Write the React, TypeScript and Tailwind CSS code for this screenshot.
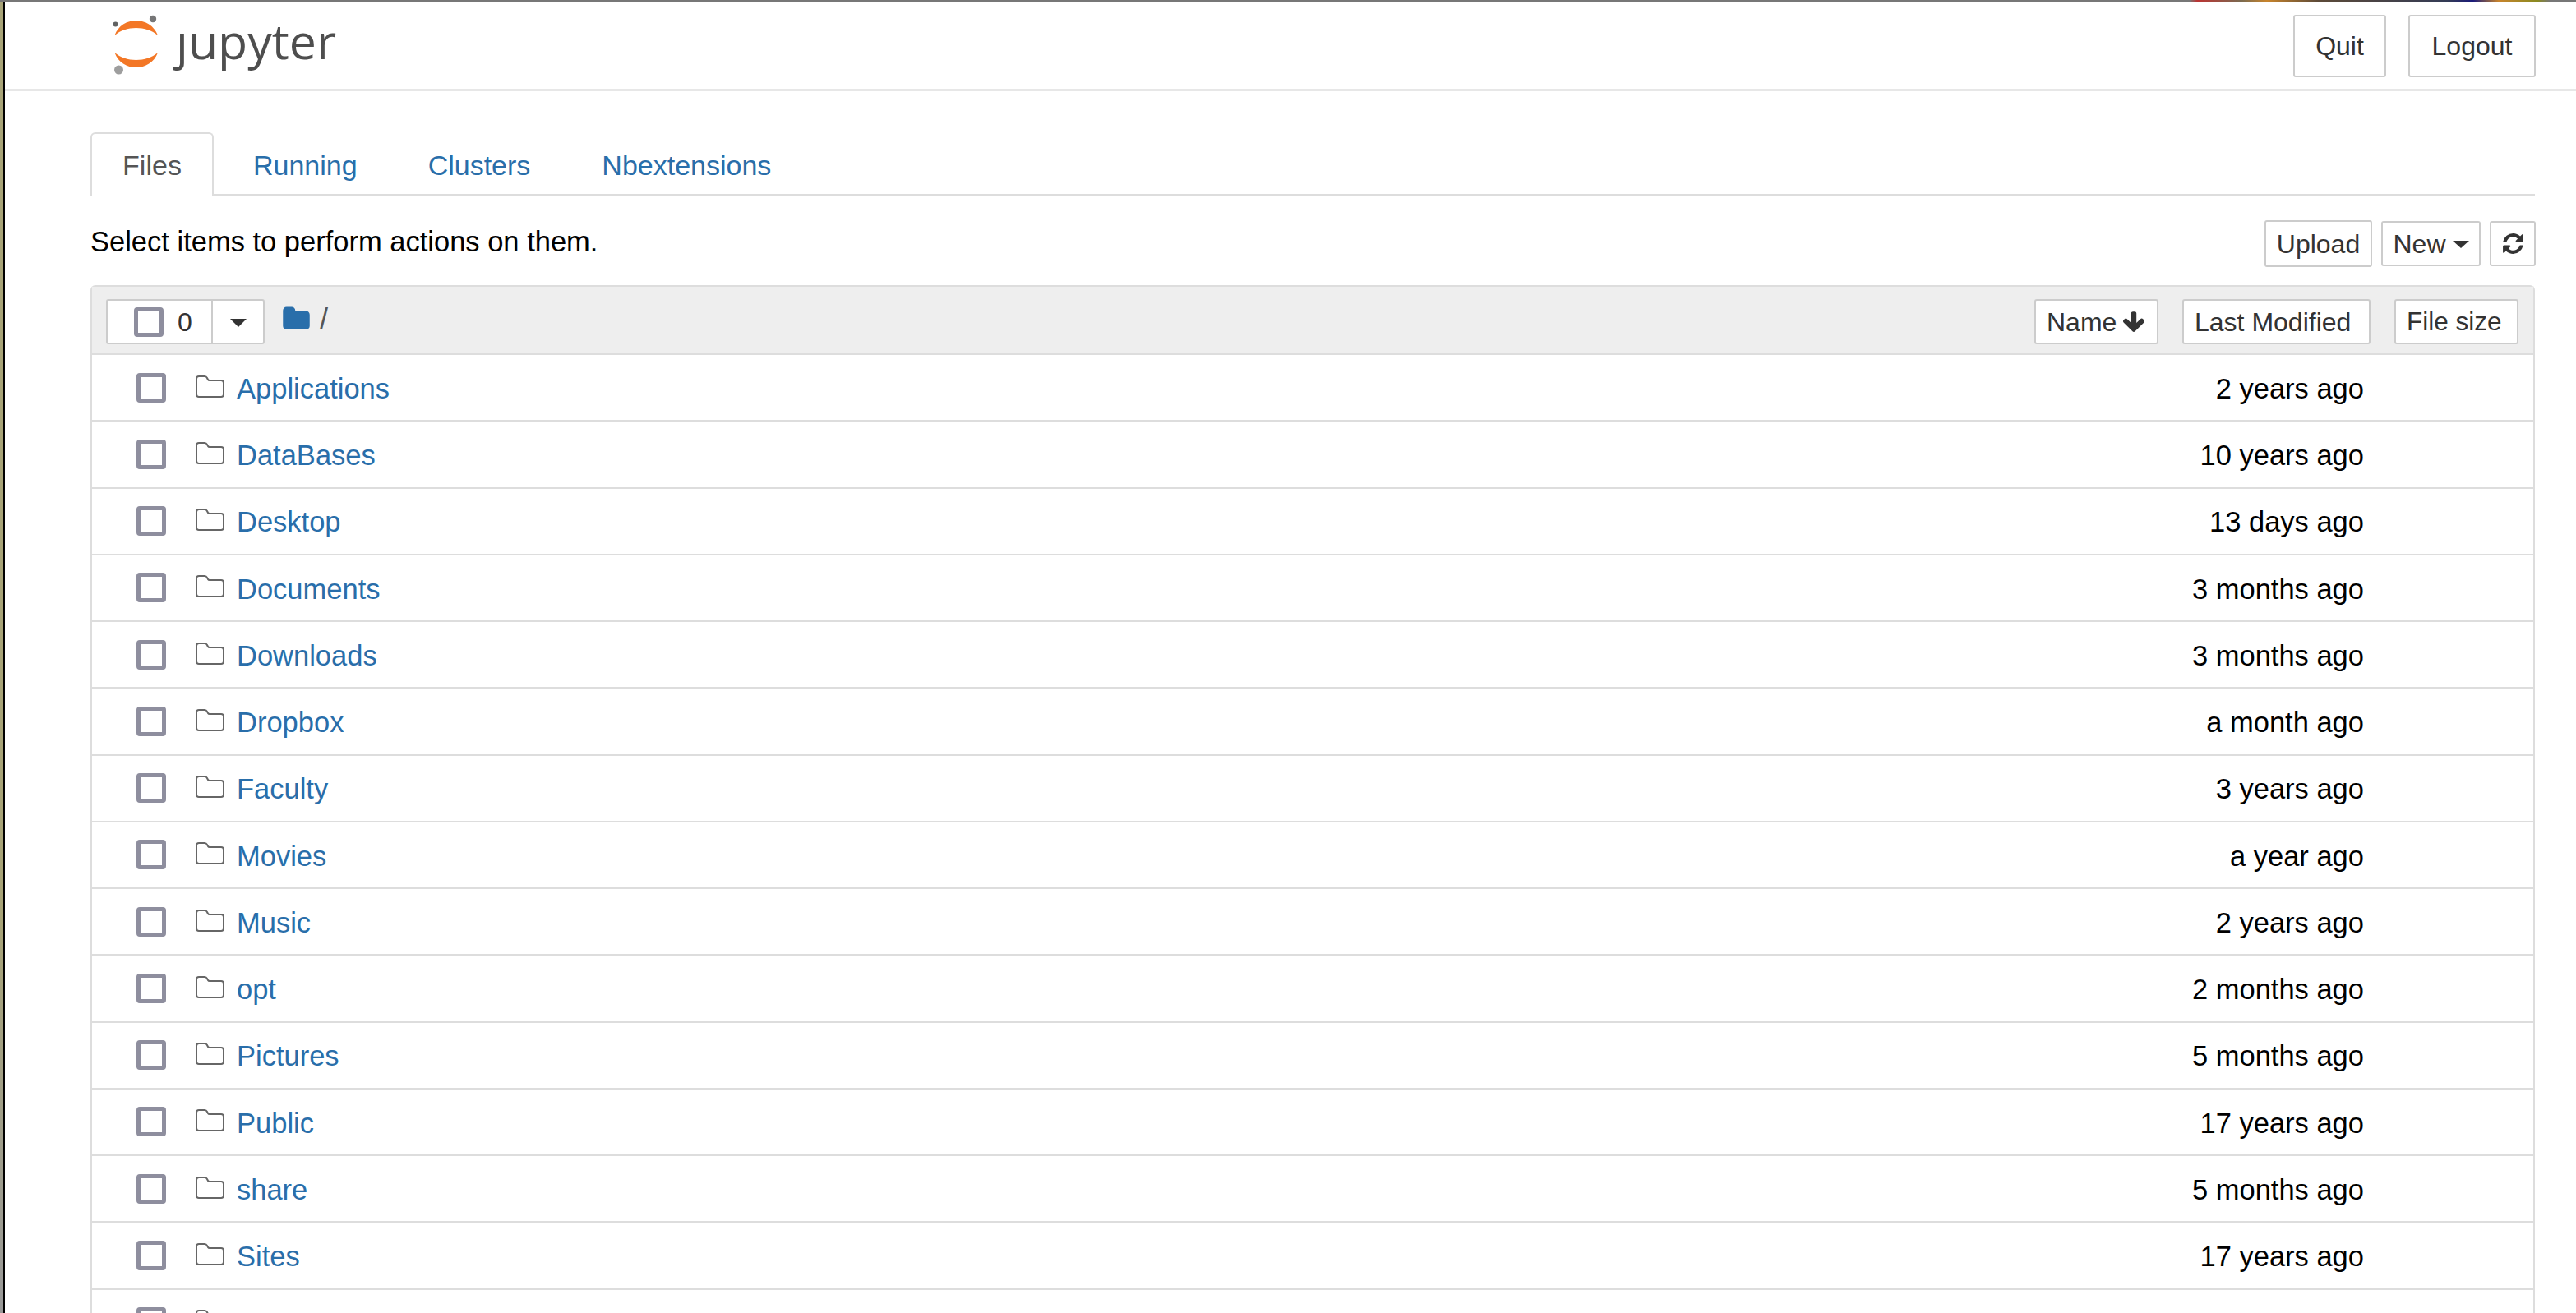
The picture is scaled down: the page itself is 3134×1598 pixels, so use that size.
const rows = [
  { name: "Applications", modified: "2 years ago" },
  { name: "DataBases", modified: "10 years ago" },
  { name: "Desktop", modified: "13 days ago" },
  { name: "Documents", modified: "3 months ago" },
  { name: "Downloads", modified: "3 months ago" },
  { name: "Dropbox", modified: "a month ago" },
  { name: "Faculty", modified: "3 years ago" },
  { name: "Movies", modified: "a year ago" },
  { name: "Music", modified: "2 years ago" },
  { name: "opt", modified: "2 months ago" },
  { name: "Pictures", modified: "5 months ago" },
  { name: "Public", modified: "17 years ago" },
  { name: "share", modified: "5 months ago" },
  { name: "Sites", modified: "17 years ago" },
  { name: "tmp", modified: "17 years ago" },
];

const button =
  "flex items-center justify-center rounded-[3px] border-[2px] border-[#ccc] bg-white text-[#333]";

// font awesome 4 glyphs, react-icons only ships the 5 versions
function FaIcon({ d, className }: { d: string; className: string }) {
  return (
    <svg className={className} viewBox="0 0 1792 1792" fill="currentColor">
      <path d={d} />
    </svg>
  );
}

const refreshPath =
  "M1639 1056q0 5-1 7-64 268-268 434.5t-478 166.5q-146 0-282.5-55t-243.5-157l-129 129q-19 19-45 19t-45-19-19-45v-448q0-26 19-45t45-19h448q26 0 45 19t19 45-19 45l-137 137q71 66 161 102t187 36q134 0 250-65t186-179q11-17 53-117 8-23 30-23h192q13 0 22.5 9.5t9.5 22.5zm25-800v448q0 26-19 45t-45 19h-448q-26 0-45-19t-19-45 19-45l138-138q-148-137-349-137-134 0-250 65t-186 179q-11 17-53 117-8 23-30 23h-199q-13 0-22.5-9.5t-9.5-22.5v-7q65-268 270-434.5t480-166.5q146 0 284 55.500t245 156.500l130-129q19-19 45-19t45 19 19 45z";
const arrowDownPath =
  "M1675 832q0 53-37 90l-651 652q-39 37-91 37-53 0-90-37l-651-652q-38-36-38-90 0-53 38-91l74-75q39-37 91-37 53 0 90 37l294 294v-704q0-52 38-90t90-38h128q52 0 90 38t38 90v704l294-294q37-37 90-37 52 0 91 37l75 75q37 39 37 91z";
const folderPath =
  "M1728 608v704q0 92-66 158t-158 66h-1216q-92 0-158-66t-66-158v-960q0-92 66-158t158-66h320q92 0 158 66t66 158v32h672q92 0 158 66t66 158z";

function Logo() {
  return (
    <svg className="h-[78px] w-[60px]" viewBox="136 18 60 78">
      <circle cx="186" cy="24" r="4.2" fill="#767677" />
      <circle cx="140.5" cy="30.5" r="3" fill="#616262" />
      <circle cx="144.5" cy="86" r="5.5" fill="#9e9e9e" />
      <path d="M139.5 44 C148 20 183 20 192 44 C178 32 153 32 139.5 44 Z" fill="#f37726" />
      <path d="M139.5 65 C153 77 178 77 192 65 C183 89 148 89 139.5 65 Z" fill="#f37726" />
    </svg>
  );
}

function FolderOutline() {
  return (
    <svg className="h-[30px] w-[36px]" viewBox="0 0 36 30" fill="none" stroke="#666" strokeWidth="2">
      <path d="M4 2h7c1.5 0 2.5 1 3 2l1 2c.4.8 1 1 2 1h14c2 0 3 1 3 3v14c0 2-1 3-3 3H4c-2 0-3-1-3-3V5c0-2 1-3 3-3z" />
    </svg>
  );
}

function Checkbox() {
  return <input type="checkbox" className="h-[36px] w-[36px] shrink-0 appearance-none rounded-[4px] border-[5px] border-[#8e8e9e] bg-white" />;
}

export default function App() {
  return (
    <div className="flex h-[1598px] w-[3134px] flex-col overflow-hidden bg-white font-['Liberation_Sans',Arial,sans-serif] text-black">
      <div className="h-[3px] w-full border-b border-black bg-[linear-gradient(to_right,#777_0%,#777_85%,#b33_85.3%,#7a6a50_87%,#c8842c_88%,#5c4a38_90%,#333b55_95%,#1a1a7a_96%,#c8842c_97%,#8a8a20_98.5%,#777_99%)]" />
      <div className="flex min-h-0 flex-1">
        <div className="w-[6px] shrink-0 border-r-[2px] border-black bg-[linear-gradient(to_bottom,#a8a478_0%,#a8a478_70%,#999_100%)]" />
        <div className="min-w-0 flex-1">
          <header className="flex h-[108px] items-center justify-between border-b-[3px] border-[#e7e7e7] pl-[130px] pr-[49px]">
            <div className="flex items-center gap-[18px]">
              <Logo />
              <span className="mt-[-12px] font-['Open_Sans',sans-serif] text-[59px] leading-none text-[#4e4e4e]">ȷupyter</span>
            </div>
            <div className="flex gap-[27px] text-[32px]">
              <button className={`${button} h-[76px] w-[113px]`}>Quit</button>
              <button className={`${button} h-[76px] w-[155px]`}>Logout</button>
            </div>
          </header>

          <main className="pl-[104px] pr-[50px] pt-[50px]">
            <nav className="flex h-[77px] border-b-[2px] border-[#ddd] text-[34px] text-[#296eaa]">
              <div className="z-10 flex h-[77px] w-[150px] items-center justify-center rounded-t-[6px] border-[2px] border-b-0 border-[#ddd] bg-white pt-[2px] text-[#555]">
                Files
              </div>
              <a className="ml-[48px] flex items-center pt-[6px]">Running</a>
              <a className="ml-[86px] flex items-center pt-[6px]">Clusters</a>
              <a className="ml-[87px] flex items-center pt-[6px]">Nbextensions</a>
            </nav>

            <div className="flex h-[109px] items-start justify-between pt-[30px]">
              <span className="mt-[9px] text-[34.5px] leading-none">Select items to perform actions on them.</span>
              <div className="-mr-[1px] flex items-center gap-[11px] text-[32px]">
                <button className={`${button} h-[57px] w-[131px]`}>Upload</button>
                <button className={`${button} h-[55px] w-[121px] gap-[8px]`}>
                  New
                  <span className="mt-[2px] h-0 w-0 border-x-[10px] border-t-[9px] border-x-transparent border-t-[#333]" />
                </button>
                <button className={`${button} h-[55px] w-[56px]`} aria-label="Refresh">
                  <FaIcon d={refreshPath} className="h-[29px] w-[29px]" />
                </button>
              </div>
            </div>

            <section className="rounded-t-[6px] border-x-[2px] border-t-[2px] border-[#ddd]">
              <div className="flex h-[83px] items-center justify-between border-b-[2px] border-[#ddd] bg-[#eee] pl-[17px] pr-[18px] pt-[4px] text-[32px]">
                <div className="flex items-center">
                  <div className="flex h-[55px] w-[193px] rounded-[3px] border-[2px] border-[#ccc] bg-white text-[#333]">
                    <div className="flex w-[128px] items-center gap-[17px] border-r-[2px] border-[#ccc] pl-[32px]">
                      <Checkbox />
                      <span>0</span>
                    </div>
                    <div className="flex flex-1 items-center justify-center">
                      <span className="mt-[2px] h-0 w-0 border-x-[10px] border-t-[10px] border-x-transparent border-t-[#333]" />
                    </div>
                  </div>
                  <FaIcon d={folderPath} className="ml-[21px] mt-[-6px] h-[35px] w-[35px] text-[#296eaa]" />
                  <span className="ml-[11px] mt-[-6px] text-[36px] text-[#555]">/</span>
                </div>
                <div className="flex gap-[29px]">
                  <button className={`${button} h-[55px] w-[151px] justify-start gap-[6px] pl-[13px]`}>
                    Name
                    <FaIcon d={arrowDownPath} className="h-[30px] w-[30px]" />
                  </button>
                  <button className={`${button} h-[55px] w-[229px] justify-start pl-[13px]`}>Last Modified</button>
                  <button className={`${button} h-[55px] w-[151px] justify-start pl-[13px] text-[31.5px]`}>File size</button>
                </div>
              </div>

              {rows.map((row) => (
                <div key={row.name} className="flex h-[81.25px] items-center border-b-[2px] border-[#ddd] pl-[54px] pr-[206px] text-[34.5px]">
                  <Checkbox />
                  <span className="ml-[36px] mt-[-2px] flex">
                    <FolderOutline />
                  </span>
                  <a className="ml-[14px] pt-[4px] text-[#296eaa]">{row.name}</a>
                  <span className="ml-auto pt-[4px]">{row.modified}</span>
                </div>
              ))}
            </section>
          </main>
        </div>
      </div>
    </div>
  );
}
